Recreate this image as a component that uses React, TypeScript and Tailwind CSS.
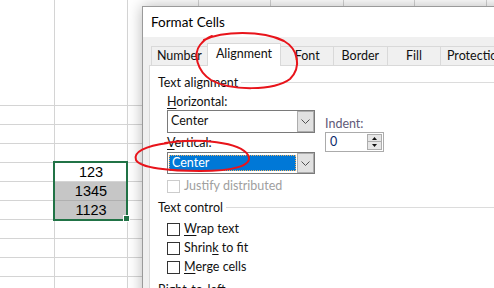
import React from "react";

const Chevron = () => (
  <svg width="9" height="5" viewBox="0 0 9 5">
    <polyline points="0.5,0.5 4.5,4.5 8.5,0.5" fill="none" stroke="#505050" strokeWidth="1" />
  </svg>
);

const DropBtn = () => (
  <div className="flex h-full w-[17px] items-center justify-center border border-[#adadad] bg-[#e1e1e1]">
    <Chevron />
  </div>
);

const Check = ({ label, under, rest, pre, disabled }: { label?: string; under?: string; rest?: string; pre?: string; disabled?: boolean }) => (
  <div className="flex h-[13px] items-center">
    <div className={disabled ? "h-[13px] w-[13px] border border-[#cccccc] bg-white" : "h-[13px] w-[13px] border border-[#333333] bg-white"} />
    <span className={disabled ? "ml-[4px] text-[#a0a0a0]" : "ml-[4px] text-[#111]"}>
      {label}
      {pre}
      {under && <span className="underline underline-offset-2">{under}</span>}
      {rest}
    </span>
  </div>
);

export default function App() {
  const rows = Array.from({ length: 11 }, (_, i) => i);
  const cols = Array.from({ length: 8 }, (_, i) => i);
  const cellText = (r: number, c: number) => {
    if (c !== 1) return "";
    if (r === 4) return "123";
    if (r === 5) return "1345";
    if (r === 6) return "1123";
    return "";
  };
  return (
    <div className="relative h-[288px] w-[494px] overflow-hidden bg-white" style={{ fontFamily: '"Lato", "Noto Sans", "Liberation Sans", sans-serif' }}>
      {/* spreadsheet grid */}
      <div className="grid grid-cols-[55px_73px_71px_72px_73px_71px_72px_72px] grid-rows-[106px_repeat(10,19px)] font-['Liberation_Sans',sans-serif] text-[14.5px] text-black">
        {rows.map((r) =>
          cols.map((c) => {
            const grey = c === 1 && (r === 5 || r === 6);
            return (
              <div
                key={`${r}-${c}`}
                className={
                  grey
                    ? "flex items-center justify-center border-b border-r border-b-[#b0b0b0] border-r-[#d4d4d4] bg-[#c6c6c6] leading-none"
                    : "flex items-center justify-center border-b border-r border-[#d4d4d4] leading-none"
                }
              >
                {cellText(r, c)}
              </div>
            );
          })
        )}
      </div>

      {/* selection outline */}
      <div className="absolute left-[53px] top-[161px] h-[60px] w-[75px] border-2 border-[#217346]" />
      <div className="absolute left-[123px] top-[215px] h-[7px] w-[7px] border border-white bg-[#217346]" />

      {/* dialog */}
      <div className="absolute left-[142px] top-[6px] h-[300px] w-[370px] border border-[#9a9a9a] bg-[#f0f0f0] shadow-[0_0_14px_rgba(0,0,0,0.28)] text-[12.5px] text-[#111]">
        <div className="flex h-[30px] items-center bg-white pl-[8px] text-[13.5px] text-black">Format Cells</div>
        <div className="pl-[6px] pt-[6px]">
          <div className="flex h-[22px] items-end pl-[2px]">
            <div className="flex h-[19px] w-[56px] items-center justify-center border-l border-t border-[#d9d9d9]">Number</div>
            <div className="relative z-10 mb-[-1px] flex h-[23px] w-[75px] items-center justify-center border-l border-r border-t border-[#d9d9d9] bg-white pb-[2px]">Alignment</div>
            <div className="flex h-[19px] w-[53px] items-center justify-center border-r border-t border-[#d9d9d9]">Font</div>
            <div className="flex h-[19px] w-[54px] items-center justify-center border-r border-t border-[#d9d9d9]">Border</div>
            <div className="flex h-[19px] w-[54px] items-center justify-center border-r border-t border-[#d9d9d9]">Fill</div>
            <div className="flex h-[19px] w-[70px] items-center justify-center border-r border-t border-[#d9d9d9]">Protection</div>
          </div>
          <div className="h-[260px] border border-[#d9d9d9] bg-white pl-[8px] pt-[9px]">
            <div className="flex h-[16px] items-center">
              <span>Text alignment</span>
              <div className="ml-[3px] mt-[-2px] h-px flex-1 bg-[#dcdcdc]" />
            </div>
            <div className="ml-[9px] mt-[3px] flex">
              <div className="flex w-[148px] flex-col">
                <div className="h-[16px] leading-[16px]"><span className="underline underline-offset-2">H</span>orizontal:</div>
                <div className="mt-[0px] flex h-[23px] items-center border border-[#7a7a7a] bg-white">
                  <span className="flex-1 pl-[3px]">Center</span>
                  <DropBtn />
                </div>
                <div className="mt-[2px] h-[16px] leading-[16px]"><span className="underline underline-offset-2">V</span>ertical:</div>
                <div className="mt-[1px] flex h-[22px] items-center border border-[#7a7a7a] bg-white">
                  <div className="ml-[1px] flex h-[16px] flex-1 items-center border border-dotted border-[#f0b060] bg-[#0078d7] pl-[2px] text-white">Center</div>
                  <div className="ml-[1px] h-full"><DropBtn /></div>
                </div>
                <div className="mt-[6px]"><Check disabled label="Justify distributed" /></div>
              </div>
              <div className="ml-[10px] flex flex-col pt-[22px]">
                <div className="h-[16px] leading-[16px] text-[#5f5a78]">Indent:</div>
                <div className="mt-[0px] flex h-[20px] w-[59px] items-center border border-[#ababab] bg-white">
                  <span className="flex-1 pl-[4px] text-[#0b2a6b]">0</span>
                  <div className="mr-[1px] flex h-[16px] w-[15px] flex-col">
                    <div className="flex h-[8px] items-center justify-center border border-[#adadad] bg-[#e6e6e6]">
                      <svg width="5" height="3" viewBox="0 0 5 3"><polygon points="2.5,0 5,3 0,3" fill="#111" /></svg>
                    </div>
                    <div className="flex h-[8px] items-center justify-center border border-t-0 border-[#adadad] bg-[#e6e6e6]">
                      <svg width="5" height="3" viewBox="0 0 5 3"><polygon points="0,0 5,0 2.5,3" fill="#111" /></svg>
                    </div>
                  </div>
                </div>
              </div>
            </div>
            <div className="mt-[7px] flex h-[16px] items-center">
              <span>Text control</span>
              <div className="ml-[3px] mt-[-2px] h-px flex-1 bg-[#dcdcdc]" />
            </div>
            <div className="ml-[9px] mt-[7px] flex flex-col gap-[6px]">
              <Check under="W" rest="rap text" />
              <Check pre="Shrin" under="k" rest=" to fit" />
              <Check under="M" rest="erge cells" />
            </div>
            <div className="mt-[8px] flex h-[16px] items-center">
              <span>Right-to-left</span>
              <div className="ml-[3px] h-px flex-1 bg-[#dcdcdc]" />
            </div>
          </div>
        </div>
      </div>

      {/* red annotations */}
      <svg className="pointer-events-none absolute left-0 top-0" width="494" height="288" viewBox="0 0 494 288">
        <path
          d="M 204 40 C 222 31, 262 30, 284 41 C 298 49, 302 67, 290 79 C 274 91, 230 91, 211 80 C 197 71, 193 54, 200 45 C 203 41, 207 38, 212 36"
          fill="none"
          stroke="#e8141b"
          strokeWidth="2"
          strokeLinecap="round"
        />
        <path
          d="M 165 143 C 200 138, 240 142, 248 155 C 254 166, 232 171, 200 171 C 170 171, 140 168, 136 160 C 133 152, 145 146, 168 143"
          fill="none"
          stroke="#e8141b"
          strokeWidth="2"
          strokeLinecap="round"
        />
      </svg>
    </div>
  );
}
